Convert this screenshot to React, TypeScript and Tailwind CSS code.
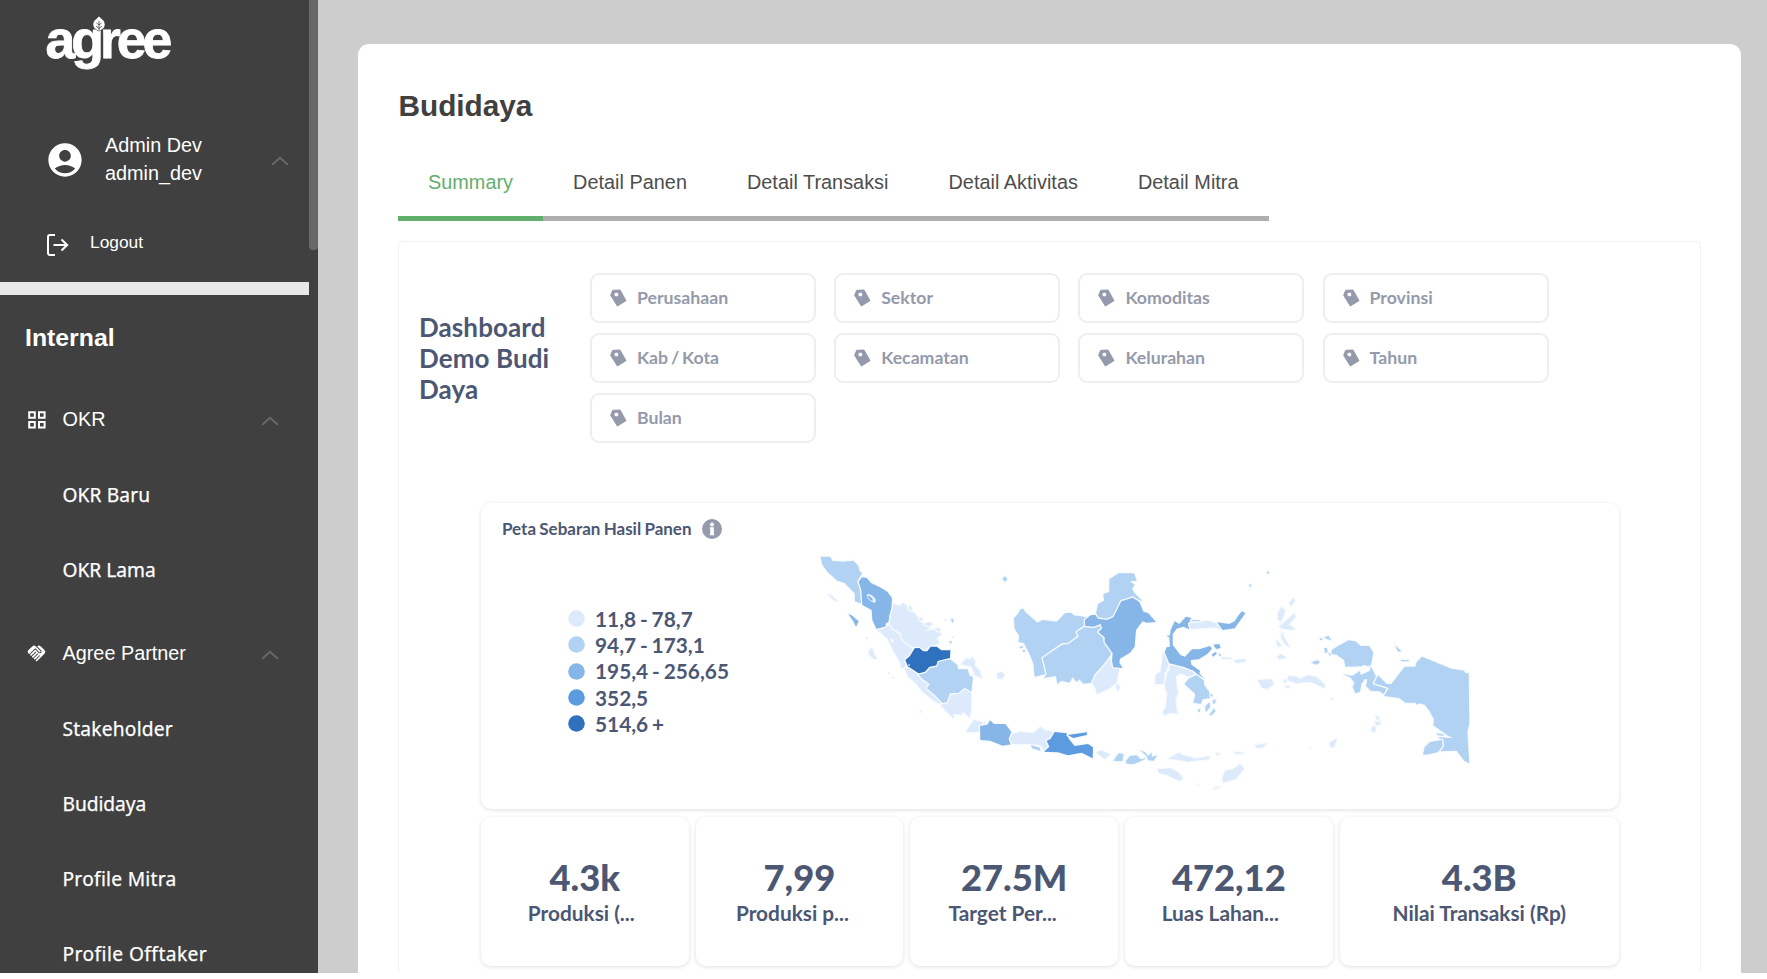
import { MdAccountCircle, MdHandshake } from "react-icons/md";

const C1 = "#dceafb";
const C2 = "#b1d2f2";
const C3 = "#86b5e8";
const C4 = "#5c9be0";
const C5 = "#2f71bd";

type Shape = [string, string];

const WEST: Shape[] = [
  [C2, "62,80 90,80 98,93 130,95 160,92 175,108 178,122 186,130 176,148 184,180 187,222 165,214 164,190 133,158 112,152 82,125 66,103"],
  [C3, "186,142 200,144 214,160 240,172 262,185 276,204 275,232 281,248 268,255 270,278 258,278 256,292 230,298 217,270 215,240 187,225 184,180 176,155"],
  [C3, "145,253 155,256 176,274 168,290 160,274"],
  [C1, "84,194 93,196 113,215 105,213"],
  [C1, "281,222 300,228 308,220 318,224 324,240 344,250 362,275 392,292 372,305 405,298 425,312 410,325 418,340 392,350 375,360 350,354 335,356 316,342 300,325 299,308 275,300 268,285 272,258"],
  [C1, "232,300 256,294 268,285 275,300 299,312 300,325 316,342 338,356 330,378 316,388 316,412 304,414 300,395 280,362 262,325 245,310"],
  [C5, "316,390 330,378 344,355 358,354 370,364 382,364 392,350 410,350 424,361 451,361 450,388 414,396 412,408 388,414 378,428 354,432 325,412"],
  [C1, "314,416 325,414 352,432 368,448 386,464 384,478 420,514 422,524 396,508 366,484 350,462 325,440"],
  [C2, "356,434 378,428 390,414 412,410 416,396 450,388 472,405 474,418 503,418 508,436 519,442 514,486 495,476 478,492 450,494 444,520 428,520 405,495 380,475 390,462 368,448"],
  [C1, "422,524 444,520 452,494 478,492 495,478 514,490 513,545 508,562 490,545 484,554 460,552 462,566 440,545"],
  [C1, "484,402 498,386 512,387 516,381 526,394 524,406 540,424 546,444 524,436 515,410 490,404"],
  [C1, "592,428 606,426 614,436 606,446 592,446"],
  [C1, "206,362 216,354 222,372 232,388 220,386 208,374"],
  [C1, "326,228 334,230 336,240 328,240"],
  [C1, "358,262 368,264 366,274 360,272"],
  [C1, "372,282 388,276 398,282 386,290"],
  [C1, "406,294 420,296 420,304 410,302"],
  [C2, "453,266 460,268 460,278 455,276"],
  [C2, "448,334 456,334 454,340 449,340"],
  [C2, "607,146 614,139 622,147 616,156"],
  [C1, "498,606 516,578 522,570 548,576 550,588 540,590 540,606"],
  [C3, "540,588 562,584 570,571 582,582 616,582 634,606 628,628 638,642 608,647 570,632 541,630"],
  [C1, "636,612 660,606 700,610 722,590 736,602 756,604 758,614 742,634 744,656 732,662 724,646 690,642 636,642 630,628"],
  [C2, "693,645 720,653 721,663 696,655"],
  [C4, "764,606 800,610 806,626 824,648 864,642 879,652 878,685 845,668 804,676 774,667 732,665 748,650 740,632 752,626"],
  [C4, "803,615 861,607 860,615 820,624"],
  [C1, "889,668 902,661 931,673 914,686"],
  [C2, "940,692 956,670 971,672 967,694"],
  [C2, "977,694 990,678 1010,676 1022,688 1044,684 1000,703 980,701"],
  [C2, "1019,661 1034,666 1046,678 1054,667 1056,680 1071,676 1062,692 1045,691 1038,676"],
  [C2, "642,265 655,250 662,237 670,236 676,246 712,278 728,270 770,275 796,249 815,249 820,256 860,262 866,276 855,290 832,304 836,320 805,340 786,342 734,380 728,388 738,432 704,440 700,400 690,375 672,340 655,335 658,318 644,296"],
  [C2, "728,384 786,344 805,342 836,320 830,306 855,290 880,294 902,286 905,296 895,306 914,330 935,366 926,386 912,406 886,432 876,458 850,461 838,448 830,456 818,442 808,458 785,452 772,462 768,438 732,444 740,432"],
  [C1, "930,384 936,412 958,416 952,440 950,455 930,475 890,492 888,478 876,460 888,434 912,408"],
  [C1, "952,460 959,470 955,483 948,474"],
  [C2, "928,148 956,130 1002,130 1010,152 990,154 1004,165 996,176 1004,190 1028,214 998,203 964,214 952,240 940,262 912,270 894,264 888,250 894,222 912,212 910,192 928,186"],
  [C3, "856,288 854,270 872,256 886,254 894,266 920,270 940,262 964,214 998,203 1018,216 1030,245 1045,250 1068,276 1040,278 1028,274 1008,300 1004,350 990,368 960,386 958,398 968,414 940,412 936,392 938,370 914,336 914,322 895,306 906,296 902,282 880,290"],
  [C2, "658,350 668,348 668,354 660,355"],
  [C2, "668,360 676,360 674,366 669,365"],
];

const EAST: Shape[] = [
  [C1, "100,302 108,308 118,342 104,370 102,402 76,402 76,376 92,364 96,340"],
  [C1, "118,342 150,344 196,366 202,376 188,384 150,370 138,378 140,410 144,430 136,450 142,492 120,488 104,495 98,486 108,470 112,430 104,408 112,370 120,358"],
  [C2, "200,374 222,392 222,404 242,432 240,444 218,448 212,462 190,458 196,432 163,402 176,386"],
  [C3, "122,240 134,214 148,222 168,200 184,204 184,212 174,220 178,238 160,230 140,236 128,252 128,285 152,316 165,320 186,298 208,298 240,288 246,296 232,312 206,328 182,330 184,344 210,362 208,370 222,386 190,362 160,350 136,344 118,340 104,306 110,292 120,290 118,262 110,258 120,256"],
  [C1, "178,222 186,215 210,214 236,212 262,222 276,242 256,232 182,236"],
  [C2, "184,210 210,211 210,214 184,214"],
  [C3, "261,217 298,222 314,214 324,198 336,184 346,190 330,212 314,235 278,240"],
  [C3, "250,284 268,282 272,294 258,297"],
  [C3, "245,314 256,306 261,310 250,320"],
  [C2, "266,310 273,313 272,319 267,317"],
  [C2, "225,470 238,456 241,470 228,487"],
  [C2, "238,494 252,475 257,484 243,497"],
  [C2, "248,450 257,448 256,460 249,462"],
  [C2, "204,478 211,478 210,487 205,485"],
  [C2, "241,431 248,434 247,440 242,439"],
  [C1, "274,322 304,324 303,328 276,326"],
  [C2, "411,64 418,66 416,72 411,70"],
  [C2, "357,102 365,105 363,111 358,108"],
  [C1, "444,188 456,170 465,184 454,215 443,208"],
  [C1, "447,230 494,190 496,202 476,224 494,236 490,240 460,236"],
  [C1, "477,158 490,145 495,152 484,169"],
  [C1, "456,246 462,262 480,292 466,284 453,262"],
  [C1, "438,270 455,286 444,290"],
  [C1, "442,320 452,313 469,322 448,329"],
  [C1, "311,330 346,327 346,335 320,339"],
  [C1, "383,390 425,388 431,402 412,417 396,413"],
  [C1, "474,378 500,380 510,386 535,376 560,382 584,404 584,415 550,398 528,396 500,400 476,392"],
  [C1, "461,392 468,386 470,396 463,399"],
  [C1, "466,408 480,408 476,414 468,413"],
  [C2, "543,338 560,331 571,336 560,344"],
  [C2, "582,262 595,258 605,271 592,268"],
  [C2, "569,264 578,266 576,271 570,270"],
  [C2, "582,295 590,293 594,306 586,310"],
  [C2, "594,310 606,308 602,319"],
  [C2, "604,312 606,300 620,290 656,271 676,274 692,288 718,288 730,308 722,350 700,344 696,349 646,350 642,330 620,314"],
  [C2, "639,372 666,378 690,363 692,375 720,362 722,348 740,384 730,402 772,414 764,434 748,424 722,422 708,408 712,388 704,388 694,402 690,426 676,430 668,410 674,398 660,382"],
  [C2, "744,376 770,402 784,402 824,350 856,350 860,336 876,320 964,356 1002,362 1006,369 1016,370 1018,520 1012,545 1018,640 1004,634 980,602 932,604 938,578 926,562 968,564 952,556 910,526 912,508 898,482 884,464 868,460 860,464 856,458 826,458 808,444 762,438 776,414 732,400"],
  [C2, "879,614 884,592 900,576 936,570 938,588 924,606 896,613"],
  [C2, "920,550 940,553 942,557 922,556"],
  [C2, "795,287 815,303 804,305"],
  [C2, "812,330 836,330 836,334 814,334"],
  [C1, "736,496 749,504 742,511"],
  [C1, "735,515 751,515 751,524 738,525"],
  [C1, "726,530 739,530 734,547 725,544"],
  [C1, "599,578 621,565 612,592 601,590"],
  [C1, "375,587 411,579 398,593 378,593"],
  [C1, "115,626 146,608 160,616 200,626 238,619 239,627 172,635 150,630"],
  [C1, "256,608 270,612 262,617"],
  [C1, "314,605 341,608 338,612 316,610"],
  [C1, "82,658 122,655 146,668 159,686 148,693 110,674 88,670"],
  [C1, "278,682 286,662 310,658 330,643 342,656 318,686 278,698"],
  [C1, "248,716 270,709 260,716"],
  [C1, "200,704 207,705 205,709"],
  [C1, "538,591 543,592 541,596"],
  [C1, "602,444 608,445 606,449"],
];

function Shapes({ items }: { items: Shape[] }) {
  return (
    <>
      {items.map(([fill, points], i) => (
        <polygon key={i} points={points} fill={fill} />
      ))}
    </>
  );
}

function IndonesiaMap() {
  return (
    <svg className="mt-[27px] h-[270px] w-[680px] shrink-0" viewBox="0 0 2040 810">
      <g stroke="#f8fbfe" strokeWidth="8" strokeLinejoin="round" paintOrder="stroke">
        <Shapes items={WEST} />
        <g transform="translate(990 60)">
          <Shapes items={EAST} />
        </g>
      </g>
      <ellipse cx="214" cy="205" rx="17" ry="8" fill="#e9f2fc" transform="rotate(42 214 205)" />
      <ellipse cx="211" cy="205" rx="10" ry="3.500" fill={C3} transform="rotate(42 211 205)" />
      <circle cx="327" cy="405" r="3" fill="#b1d2f2" />
      <ellipse cx="276" cy="332" rx="8" ry="3" fill="#fff" transform="rotate(55 276 332)" />
      <g fill={C1}>
        <circle cx="200" cy="323" r="3" />
        <circle cx="268" cy="430" r="3" />
        <circle cx="279" cy="443" r="3" />
        <circle cx="361" cy="545" r="3" />
        <circle cx="436" cy="270" r="3" />
        <circle cx="554" cy="579" r="3" />
        <circle cx="458" cy="322" r="3" />
      </g>
    </svg>
  );
}

function Chevron() {
  return (
    <svg className="h-[10px] w-[18px]" viewBox="0 0 18 10" fill="none" stroke="#686868" strokeWidth="2">
      <path d="M1.200 8.800 9 1.800 16.800 8.800" />
    </svg>
  );
}

function Tag() {
  return (
    <svg className="h-[18px] w-[17px] shrink-0" viewBox="0 0 51 54">
      <path
        fillRule="evenodd"
        fill="#949aab"
        stroke="#949aab"
        strokeWidth="3"
        strokeLinejoin="round"
        d="M8 4 30 3 48 35 22 51 2 19ZM19 9.500a7 7 0 1 0 .01 0Z"
      />
    </svg>
  );
}

function Info() {
  return (
    <svg className="h-5 w-5" viewBox="0 0 20 20">
      <circle cx="10" cy="10" r="10" fill="#949aab" />
      <circle cx="10" cy="5.5" r="2" fill="#fff" />
      <path d="M7.800 8.300h4.100v6.400h.3V16.200h-4.400v-1.500h.4V9.800h-.4z" fill="#fff" />
    </svg>
  );
}

function Logo() {
  return (
    <div className="relative h-[76px] pl-[45.500px]">
      <div className="pt-[10.500px] font-['Liberation_Sans',Arial,sans-serif] text-[53.500px] leading-[58px] font-bold tracking-[-4px] text-white [-webkit-text-stroke:0.8px_white]">
        agree
      </div>
      <svg className="absolute top-4 left-[92px] h-[20px] w-[14px]" viewBox="0 0 14 20">
        <path d="M7 0C9 3 13 4 13 8.500 13 12 10 14 7 15 4 14 1 12 1 8.500 1 4 5 3 7 0Z" fill="#fff" stroke="#404040" strokeWidth=".6" />
        <path d="M7 16V5M7 9 4.500 7M7 9l2.500-2M7 12.500 4 10M7 12.500l3-2.500" stroke="#404040" strokeWidth=".8" fill="none" />
        <path d="M7 14.500V20" stroke="#fff" strokeWidth="1.200" />
      </svg>
    </div>
  );
}

function GroupRow({ label, icon }: { label: string; icon: React.ReactNode }) {
  return (
    <div className="flex h-[75px] items-center pr-[30px] pl-[26px] text-[19.84px] text-white">
      <span className="flex w-[36.500px] items-center">{icon}</span>
      <span className="flex-1 pt-px">{label}</span>
      <span className="mt-0.5">
        <Chevron />
      </span>
    </div>
  );
}

function Item({ label, spacing }: { label: string; spacing: string }) {
  return (
    <div className="flex h-[75px] items-center pt-px pl-[62.500px] font-['Noto_Sans',sans-serif] text-[19.200px] text-white">
      <span className={`[-webkit-text-stroke:0.25px_white] ${spacing}`}>{label}</span>
    </div>
  );
}

function Sidebar() {
  return (
    <aside className="flex w-[318px] shrink-0 overflow-hidden bg-[#404040]">
      <div className="w-[309px] shrink-0">
        <Logo />
        <div className="mt-[54.500px] flex h-[57px] items-center pr-5 pl-[45px] text-[19.84px] leading-[28.500px] text-white">
          <MdAccountCircle className="mt-0.5 h-10 w-10 shrink-0" />
          <div className="ml-5 flex-1">
            <div>Admin Dev</div>
            <div>admin_dev</div>
          </div>
          <span className="mt-[3px]">
            <Chevron />
          </span>
        </div>
        <div className="mt-[34.500px] flex h-[40px] items-center pl-[46px] text-[17.360px] text-white">
          <svg className="mt-[5px] h-6 w-6" viewBox="0 0 24 24" fill="none" stroke="#fff" strokeWidth="2">
            <path d="M9 2H4Q2 2 2 4V20Q2 22 4 22H9M7.500 12H21M15.500 6.500 21.200 12 15.500 17.500" />
          </svg>
          <span className="ml-5">Logout</span>
        </div>
        <div className="mt-5 h-[13px] bg-[#e8e8e8]" />
        <div className="flex h-[87px] items-center pb-0.5 pl-[25px] text-[24.800px] font-bold text-white">Internal</div>
        <GroupRow
          label="OKR"
          icon={
            <svg className="ml-[1.500px] h-[18px] w-[18px]" viewBox="0 0 18 18" fill="none" stroke="#fff" strokeWidth="2">
              <path d="M1.200 1.200h5.600v5.600H1.200zM11 1.200h5.600v5.600H11zM1.200 11h5.600v5.600H1.200zM11 11h5.600v5.600H11z" />
            </svg>
          }
        />
        <Item label="OKR Baru" spacing="tracking-[0.12px]" />
        <Item label="OKR Lama" spacing="tracking-normal" />
        <div className="h-[9px]" />
        <GroupRow label="Agree Partner" icon={<MdHandshake className="h-[21px] w-[21px]" />} />
        <Item label="Stakeholder" spacing="tracking-[0.2px]" />
        <Item label="Budidaya" spacing="tracking-[-0.07px]" />
        <Item label="Profile Mitra" spacing="tracking-[0.26px]" />
        <Item label="Profile Offtaker" spacing="tracking-[0.42px]" />
      </div>
      <div className="h-[250px] w-[9px] rounded-b-[4px] bg-[#686868]" />
    </aside>
  );
}

const FILTERS = ["Perusahaan", "Sektor", "Komoditas", "Provinsi", "Kab / Kota", "Kecamatan", "Kelurahan", "Tahun", "Bulan"];

const TABS = ["Summary", "Detail Panen", "Detail Transaksi", "Detail Aktivitas", "Detail Mitra"];

const LEGEND: Shape[] = [
  [C1, "11,8 - 78,7"],
  [C2, "94,7 - 173,1"],
  [C3, "195,4 - 256,65"],
  [C4, "352,5"],
  [C5, "514,6 +"],
];

const STATS = [
  { value: "4.3k", label: "Produksi (...", box: "w-[207.500px]", shift: "pr-[7px]" },
  { value: "7,99", label: "Produksi p...", box: "w-[207.500px]", shift: "pr-[14px]" },
  { value: "27.5M", label: "Target Per...", box: "w-[207.500px]", shift: "pr-[23px]" },
  { value: "472,12", label: "Luas Lahan...", box: "w-[207.500px]", shift: "pr-[17px]" },
  { value: "4.3B", label: "Nilai Transaksi (Rp)", box: "w-[279px]", shift: "pr-0" },
];

const CARD = "rounded-[10px] bg-white shadow-[0_1px_4px_rgba(0,0,0,0.13)]";

export default function App() {
  return (
    <div className="h-[979px] w-[1767px] overflow-hidden bg-white font-['Liberation_Sans',Arial,sans-serif]">
      <div className="flex h-[973px] overflow-hidden bg-[#cdcdcd]">
        <Sidebar />
        <main className="mt-11 ml-10 w-[1383px] rounded-t-[11px] bg-white pt-[44px] pl-10">
          <h1 className="pl-[0.500px] text-[29.760px] leading-[36px] font-bold text-[#404040]">Budidaya</h1>
          <div className="mt-[25px] flex w-max text-[19.840px] tracking-[0.03px] text-[#4d4d4d]">
            {TABS.map((tab, i) => (
              <div
                key={tab}
                className={
                  i === 0
                    ? "h-[72px] border-b-[5px] border-[#62ae6c] px-[30px] pt-[18px] leading-[30px] text-[#62ae6c]"
                    : "h-[72px] border-b-[5px] border-[#afafaf] px-[30px] pt-[18px] leading-[30px]"
                }
              >
                {tab}
              </div>
            ))}
          </div>
          <section className="mt-[20px] h-[900px] w-[1303px] rounded-t-[4px] border border-[#f2f2f2] bg-white font-['Lato',sans-serif] font-bold">
            <div className="flex pt-[31px] pl-5">
              <h2 className="mt-[39px] w-[171px] pr-8 text-[26px] leading-[31px] tracking-[0.1px] text-[#4c5773]">
                Dashboard Demo Budi Daya
              </h2>
              <div className="grid grid-cols-[repeat(4,226px)] gap-x-[18.200px] gap-y-[9.800px]">
                {FILTERS.map((f) => (
                  <div
                    key={f}
                    className="flex h-[50px] items-center rounded-[9px] border-2 border-[#eeeeee] bg-white pl-[18px] text-[17.700px] [word-spacing:-1.500px] text-[#949aab]"
                  >
                    <Tag />
                    <span className="ml-[10px] pt-px">{f}</span>
                  </div>
                ))}
              </div>
            </div>
            <div className="mt-[60px] ml-[82px] flex w-[1138px] flex-col gap-[7.500px] text-[#4c5773]">
              <div className={`flex h-[306.500px] ${CARD}`}>
                <div className="w-[319px] shrink-0">
                  <div className="flex items-center gap-[10px] pt-[14px] pl-[21px] text-[17px] leading-[24px] [word-spacing:-0.900px]">
                    Peta Sebaran Hasil Panen
                    <Info />
                  </div>
                  <div className="mt-[65px] flex flex-col pl-[86.500px] text-[20.840px] [word-spacing:-1.200px]">
                    {LEGEND.map(([color, text]) => (
                      <div key={text} className="flex h-[26.200px] items-center gap-[10.500px]">
                        <svg className="h-[17px] w-[17px]" viewBox="0 0 17 17">
                          <circle cx="8.5" cy="8.5" r="8.3" fill={color} />
                        </svg>
                        <span className="whitespace-nowrap">{text}</span>
                      </div>
                    ))}
                  </div>
                </div>
                <IndonesiaMap />
              </div>
              <div className="flex gap-[7.200px]">
                {STATS.map((s) => (
                  <div key={s.value} className={`h-[149.500px] shrink-0 pt-[38.500px] text-center ${CARD} ${s.box}`}>
                    <div className="text-[36.300px] leading-[44px] font-black">{s.value}</div>
                    <div className={`text-[20.840px] leading-[28px] ${s.shift}`}>{s.label}</div>
                  </div>
                ))}
              </div>
            </div>
          </section>
        </main>
      </div>
    </div>
  );
}
